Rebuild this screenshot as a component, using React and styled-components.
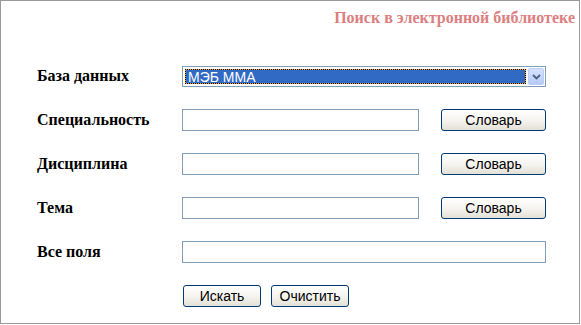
import styled, { createGlobalStyle } from "styled-components";

const GlobalStyle = createGlobalStyle`
  body {
    margin: 0;
    background: #fff;
    font-family: "Liberation Serif", serif;
  }
`;

const Frame = styled.div`
  width: 580px;
  height: 324px;
  box-sizing: border-box;
  border: 1px solid #999;
  background: #fff;
`;

const Title = styled.div`
  text-align: right;
  padding: 8px 4px 0 0;
  height: 21px;
  font-family: "Liberation Serif", serif;
  font-weight: bold;
  font-size: 16px;
  line-height: 18px;
  color: #dc7f80;
`;

const FormGrid = styled.div`
  display: grid;
  grid-template-columns: 145px 259px 105px;
  grid-auto-rows: 22px;
  row-gap: 22px;
  padding: 35px 0 0 36px;
`;

const Label = styled.div`
  align-self: center;
  font-family: "Liberation Serif", serif;
  font-weight: bold;
  font-size: 16px;
  color: #000;
  grid-column: 1;
`;

const TextInput = styled.input`
  box-sizing: border-box;
  width: ${(p) => (p.$wide ? "364px" : "237px")};
  height: 22px;
  border: 1px solid #7f9db9;
  margin: 0;
  padding: 2px 3px;
  font-family: "Liberation Sans", sans-serif;
  font-size: 13px;
  grid-column: ${(p) => (p.$wide ? "2 / 4" : "2")};
`;

const SelectBox = styled.div`
  grid-column: 2 / 4;
  align-self: end;
  box-sizing: border-box;
  width: 364px;
  height: 21px;
  border: 1px solid #7f9db9;
  padding: 2px 1px 2px 2px;
  display: flex;
  align-items: stretch;
  gap: 2px;
  background: #fff;
`;

const SelectValue = styled.div`
  flex: 1;
  display: flex;
  align-items: center;
  background: #e9a12e;
  span {
    flex: 1;
    align-self: stretch;
    display: flex;
    align-items: center;
    padding-left: 2px;
    border: 1px dotted #000;
    background: #316ac5;
    background-clip: padding-box;
    color: #fff;
    font-family: "Liberation Sans", sans-serif;
    font-size: 14px;
  }
`;

const DropArrow = styled.div`
  width: 14px;
  margin-top: -1px;
  margin-bottom: -1px;
  border: 1px solid #b9cdf6;
  border-radius: 2px;
  background: linear-gradient(#d6e3fd, #b7cbf5);
  display: flex;
  align-items: center;
  justify-content: center;
`;

const Button = styled.button`
  box-sizing: border-box;
  height: 22px;
  width: ${(p) => p.$w || "105px"};
  border: 1px solid #003c74;
  border-radius: 3px;
  background: linear-gradient(#ffffff 0%, #f4f3ee 55%, #e3e0d6 100%);
  font-family: "Liberation Sans", sans-serif;
  font-size: 14px;
  color: #000;
  padding: 0;
  margin: 0;
`;

const Actions = styled.div`
  grid-column: 2 / 4;
  display: flex;
  gap: 10px;
  padding-left: 1px;
`;

export default function App() {
  return (
    <>
      <GlobalStyle />
      <Frame>
        <Title>Поиск в электронной библиотеке</Title>
        <FormGrid>
          <Label>База данных</Label>
          <SelectBox>
            <SelectValue>
              <span>МЭБ ММА</span>
            </SelectValue>
            <DropArrow>
              <svg width="9" height="6" viewBox="0 0 9 6">
                <path d="M1 1 L4.5 4.5 L8 1" fill="none" stroke="#4d6185" strokeWidth="1.8" />
              </svg>
            </DropArrow>
          </SelectBox>

          <Label>Специальность</Label>
          <TextInput />
          <Button>Словарь</Button>

          <Label>Дисциплина</Label>
          <TextInput />
          <Button>Словарь</Button>

          <Label>Тема</Label>
          <TextInput />
          <Button>Словарь</Button>

          <Label>Все поля</Label>
          <TextInput $wide />

          <Actions>
            <Button $w="78px">Искать</Button>
            <Button $w="78px">Очистить</Button>
          </Actions>
        </FormGrid>
      </Frame>
    </>
  );
}
